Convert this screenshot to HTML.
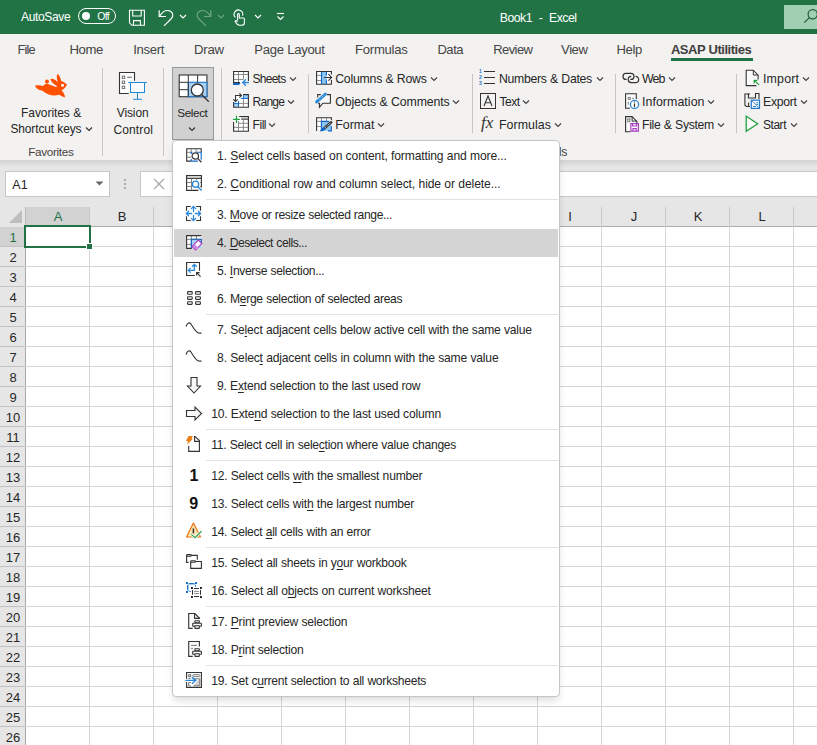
<!DOCTYPE html>
<html><head><meta charset="utf-8"><title>Excel ASAP Utilities</title><style>
*{margin:0;padding:0;box-sizing:border-box}
html,body{width:817px;height:745px;overflow:hidden;background:#fff;position:relative;font-family:"Liberation Sans",sans-serif}
.r{position:absolute}
.t{position:absolute;white-space:nowrap;font-family:"Liberation Sans",sans-serif}
u{text-decoration:underline;text-underline-offset:1.5px;text-decoration-thickness:1px}
</style></head><body>
<div class="r" style="left:0;top:0;width:817px;height:34px;background:#217346"></div>
<div class="t" style="left:21.00px;top:10.97px;font-size:12.08px;line-height:12.08px;letter-spacing:-0.386px;word-spacing:0.386px;color:#ffffff;">AutoSave</div>
<div class="r" style="left:78px;top:8px;width:38px;height:16px;border:1.3px solid #fff;border-radius:8px"></div>
<div class="r" style="left:81.5px;top:12px;width:8px;height:8px;border-radius:4px;background:#fff"></div>
<div class="t" style="left:97.30px;top:11.41px;font-size:10.50px;line-height:10.50px;letter-spacing:-0.670px;word-spacing:0.670px;color:#ffffff;">Off</div>
<svg class="r" style="left:125px;top:5px" width="24" height="24" viewBox="0 0 24 24" fill="none" stroke="#fff" stroke-width="1.1">
<path d="M4.5,5.3 H19.4 V20.3 H7 L4.5,17.8 Z"/><path d="M7.7,5.3 V11 H16.2 V5.3"/><path d="M8.5,20.3 V15.6 H15.4 V20.3"/></svg>
<svg class="r" style="left:155px;top:7px" width="22" height="22" viewBox="0 0 22 22" fill="none" stroke="#fff" stroke-width="1.2">
<path d="M4.2,3.2 V9.5 H11"/><path d="M4.8,9 C7.5,4.5 11,3.2 13.5,3.6 C16.5,4 18.5,6.5 17.6,9.5 C17,11.5 15,13 9,18.8"/></svg>
<svg class="r" style="left:179px;top:14px" width="8" height="5" viewBox="0 0 8 5" fill="none" stroke="#fff" stroke-width="1.1"><path d="M1,1 L4,4 L7,1"/></svg>
<svg class="r" style="left:193.4px;top:7px" width="22" height="22" viewBox="0 0 22 22" fill="none" stroke="#6fa586" stroke-width="1.2">
<g transform="translate(22,0) scale(-1,1)"><path d="M4.2,3.2 V9.5 H11"/><path d="M4.8,9 C7.5,4.5 11,3.2 13.5,3.6 C16.5,4 18.5,6.5 17.6,9.5 C17,11.5 15,13 9,18.8"/></g></svg>
<svg class="r" style="left:217px;top:14px" width="8" height="5" viewBox="0 0 8 5" fill="none" stroke="#6fa586" stroke-width="1.1"><path d="M1,1 L4,4 L7,1"/></svg>
<svg class="r" style="left:228px;top:6px" width="24" height="24" viewBox="0 0 24 24" fill="none" stroke="#fff" stroke-width="1.1">
<path d="M7.4,11.4 A4.3,4.3 0 1 1 14.5,9.7"/><path d="M9.6,14.5 V8.5 C9.6,7.3 11.3,7.3 11.3,8.5 V12 H15.5 C16,12 16.4,12.4 16.4,13 V17 C16.4,18.5 15,19.3 13.5,19.3 H11.5 C10.5,19.3 9.8,18.8 9,18 L7.2,15.8 C6.8,15.2 7.5,14.4 8.2,14.8 L9.6,15.8"/></svg>
<svg class="r" style="left:254px;top:14px" width="8" height="5" viewBox="0 0 8 5" fill="none" stroke="#fff" stroke-width="1.1"><path d="M1,1 L4,4 L7,1"/></svg>
<svg class="r" style="left:276px;top:12px" width="9" height="9" viewBox="0 0 9 9" fill="none" stroke="#fff" stroke-width="1.1"><path d="M1,1.5 H8"/><path d="M1.5,4.5 L4.5,7.5 L7.5,4.5"/></svg>
<div class="t" style="left:499.80px;top:11.94px;font-size:12.24px;line-height:12.24px;letter-spacing:-0.509px;word-spacing:0.509px;color:#ffffff;">Book1&nbsp; -&nbsp; Excel</div>
<div class="r" style="left:784px;top:5px;width:40px;height:24px;background:#a0cfb2"></div>
<svg class="r" style="left:800px;top:8px" width="20" height="18" viewBox="0 0 20 18" fill="none" stroke="#1e5c38" stroke-width="1.2"><circle cx="12.7" cy="6.3" r="4.6"/><path d="M9.4,9.6 L4.3,14.7"/></svg>
<div class="r" style="left:0;top:34px;width:817px;height:126px;background:#f3f2f1"></div>
<div class="t" style="left:17.50px;top:44.02px;font-size:12.73px;line-height:12.73px;letter-spacing:-0.838px;word-spacing:0.838px;color:#444444;">File</div>
<div class="t" style="left:69.40px;top:43.07px;font-size:13.15px;line-height:13.15px;letter-spacing:-0.394px;word-spacing:0.394px;color:#444444;">Home</div>
<div class="t" style="left:133.20px;top:43.11px;font-size:13.10px;line-height:13.10px;letter-spacing:-0.292px;word-spacing:0.292px;color:#444444;">Insert</div>
<div class="t" style="left:193.90px;top:43.01px;font-size:13.22px;line-height:13.22px;letter-spacing:-0.192px;word-spacing:0.192px;color:#444444;">Draw</div>
<div class="t" style="left:254.30px;top:43.10px;font-size:13.12px;line-height:13.12px;letter-spacing:-0.330px;word-spacing:0.330px;color:#444444;">Page Layout</div>
<div class="t" style="left:355.10px;top:43.08px;font-size:13.13px;line-height:13.13px;letter-spacing:-0.291px;word-spacing:0.291px;color:#444444;">Formulas</div>
<div class="t" style="left:437.40px;top:43.14px;font-size:13.07px;line-height:13.07px;letter-spacing:-0.472px;word-spacing:0.472px;color:#444444;">Data</div>
<div class="t" style="left:493.20px;top:43.20px;font-size:13.00px;line-height:13.00px;letter-spacing:-0.571px;word-spacing:0.571px;color:#444444;">Review</div>
<div class="t" style="left:561.10px;top:43.13px;font-size:13.08px;line-height:13.08px;letter-spacing:-0.452px;word-spacing:0.452px;color:#444444;">View</div>
<div class="t" style="left:616.60px;top:43.13px;font-size:13.08px;line-height:13.08px;letter-spacing:-0.436px;word-spacing:0.436px;color:#444444;">Help</div>
<div class="t" style="left:670.90px;top:43.19px;font-size:13.00px;line-height:13.00px;letter-spacing:-0.472px;word-spacing:0.472px;color:#404040;font-weight:bold;">ASAP Utilities</div>
<div class="r" style="left:671px;top:58px;width:82px;height:3px;background:#217346"></div>
<div class="r" style="left:102px;top:68px;width:1px;height:88px;background:#c8c6c4"></div>
<div class="r" style="left:163px;top:68px;width:1px;height:88px;background:#c8c6c4"></div>
<div class="r" style="left:221px;top:68px;width:1px;height:88px;background:#c8c6c4"></div>
<div class="r" style="left:308px;top:74px;width:1px;height:59px;background:#c8c6c4"></div>
<div class="r" style="left:472px;top:74px;width:1px;height:59px;background:#c8c6c4"></div>
<div class="r" style="left:615px;top:74px;width:1px;height:59px;background:#c8c6c4"></div>
<div class="r" style="left:736px;top:74px;width:1px;height:59px;background:#c8c6c4"></div>
<svg class="r" style="left:30px;top:68px" width="42" height="34" viewBox="0 0 42 34">
<path fill="#ff5000" d="M5,17.8 C8,17 11,17.3 12.5,18.3 C14,16.8 16,15.8 17,15.5 C21,17 24.5,19 27.5,19 L26,17.5 C23,15.5 21,13.5 20.3,11.3 C21.5,10 24,11 26,12.5 L27.8,14.2 C26.8,11 26.2,8 27.5,6 C29.2,6.5 30.3,9 31.2,13 C33.2,13.5 35.5,15 37,16.5 C36,19 34,21 31.5,22.5 C33,24 35,26 35,29.5 C33,29 31,27.5 29,26.8 C24,28.3 17,27.3 12.5,22.8 C10,22.3 6.5,21.5 5,17.8 Z"/>
<circle cx="17" cy="13.4" r="2" fill="#ff5000"/><circle cx="32.5" cy="17.2" r="1.5" fill="#fff"/></svg>
<div class="t" style="left:21.10px;top:108.37px;font-size:11.97px;line-height:11.97px;letter-spacing:-0.057px;word-spacing:0.057px;color:#262626;">Favorites &amp;</div>
<div class="t" style="left:10.40px;top:124.09px;font-size:11.94px;line-height:11.94px;letter-spacing:-0.102px;word-spacing:0.102px;color:#262626;">Shortcut keys</div>
<svg class="r" style="left:84.5px;top:126px" width="8" height="6" viewBox="0 0 8 6" fill="none" stroke="#333" stroke-width="1.2"><path d="M1,1.5 L4,4.5 L7,1.5"/></svg>
<div class="t" style="left:28.20px;top:145.54px;font-size:11.77px;line-height:11.77px;letter-spacing:-0.348px;word-spacing:0.348px;color:#444444;">Favorites</div>
<svg class="r" style="left:114px;top:68px" width="40" height="36" viewBox="0 0 40 36" fill="none">
<rect x="5.5" y="4.5" width="15" height="21" fill="#fdfdfd"/><path d="M14.7,25.5 H5.5 V4.5 H20.5 V12.7" stroke="#333" stroke-width="1.1"/>
<rect x="8.3" y="8.1" width="2.4" height="2.4" fill="#fff" stroke="#666" stroke-width="0.9"/>
<rect x="8.3" y="13.1" width="2.4" height="2.4" fill="#fff" stroke="#666" stroke-width="0.9"/>
<rect x="8.3" y="18.1" width="2.4" height="2.4" fill="#fff" stroke="#666" stroke-width="0.9"/>
<path d="M13.2,9.3 H17.9" stroke="#666" stroke-width="1"/>
<rect x="16.5" y="14.5" width="14" height="10" fill="#fafafa" stroke="#1e88d8" stroke-width="1"/>
<path d="M14.2,14.5 H32.8 M23.5,24.5 V31.3 M19.1,31.3 H27.9" stroke="#1e88d8" stroke-width="1"/></svg>
<div class="t" style="left:116.80px;top:108.39px;font-size:11.94px;line-height:11.94px;letter-spacing:-0.101px;word-spacing:0.101px;color:#262626;">Vision</div>
<div class="t" style="left:113.50px;top:124.04px;font-size:12.00px;line-height:12.00px;letter-spacing:0.119px;word-spacing:0.000px;color:#262626;">Control</div>
<div class="r" style="left:172px;top:67px;width:42px;height:73px;background:#d1d1d1;border:1px solid #999"></div>
<svg class="r" style="left:170px;top:64px" width="48" height="48" viewBox="0 0 48 48" fill="none">
<rect x="9.2" y="11" width="27.7" height="21.7" fill="#fff" stroke="#333" stroke-width="1.1"/>
<rect x="18.3" y="18.3" width="18.6" height="14.4" fill="#a8d1f3" stroke="#1c74c8" stroke-width="1.1"/>
<path d="M18.3,11 V18 M27.6,11 V18.3 M9.2,18.3 H18 M9.2,25.7 H18.3 M18.3,18.3 V32.7" stroke="#333" stroke-width="1"/>
<circle cx="27.3" cy="26" r="6" fill="#fff" stroke="#333" stroke-width="1.3"/>
<path d="M31.6,30.5 L38.8,37.7" stroke="#333" stroke-width="1.3"/></svg>
<div class="t" style="left:177.30px;top:107.16px;font-size:11.74px;line-height:11.74px;letter-spacing:-0.408px;word-spacing:0.408px;color:#262626;">Select</div>
<svg class="r" style="left:188px;top:125.5px" width="8" height="6" viewBox="0 0 8 6" fill="none" stroke="#333" stroke-width="1.2"><path d="M1,1.5 L4,4.5 L7,1.5"/></svg>
<div class="t" style="left:252.50px;top:73.35px;font-size:11.99px;line-height:11.99px;letter-spacing:-0.723px;word-spacing:0.723px;color:#262626;">Sheets</div>
<svg class="r" style="left:288.6px;top:75.5px" width="8" height="6" viewBox="0 0 8 6" fill="none" stroke="#444" stroke-width="1.2"><path d="M1,1.5 L4,4.5 L7,1.5"/></svg>
<div class="t" style="left:252.60px;top:96.32px;font-size:12.02px;line-height:12.02px;letter-spacing:-0.783px;word-spacing:0.783px;color:#262626;">Range</div>
<svg class="r" style="left:287.0px;top:98.8px" width="8" height="6" viewBox="0 0 8 6" fill="none" stroke="#444" stroke-width="1.2"><path d="M1,1.5 L4,4.5 L7,1.5"/></svg>
<div class="t" style="left:252.60px;top:119.34px;font-size:12.00px;line-height:12.00px;letter-spacing:-0.476px;word-spacing:0.476px;color:#262626;">Fill</div>
<svg class="r" style="left:267.5px;top:121.7px" width="8" height="6" viewBox="0 0 8 6" fill="none" stroke="#444" stroke-width="1.2"><path d="M1,1.5 L4,4.5 L7,1.5"/></svg>
<div class="t" style="left:335.20px;top:73.10px;font-size:12.29px;line-height:12.29px;letter-spacing:-0.230px;word-spacing:0.230px;color:#262626;">Columns &amp; Rows</div>
<svg class="r" style="left:429.9px;top:75.5px" width="8" height="6" viewBox="0 0 8 6" fill="none" stroke="#444" stroke-width="1.2"><path d="M1,1.5 L4,4.5 L7,1.5"/></svg>
<div class="t" style="left:335.20px;top:96.06px;font-size:12.33px;line-height:12.33px;letter-spacing:-0.127px;word-spacing:0.127px;color:#262626;">Objects &amp; Comments</div>
<svg class="r" style="left:452.0px;top:98.8px" width="8" height="6" viewBox="0 0 8 6" fill="none" stroke="#444" stroke-width="1.2"><path d="M1,1.5 L4,4.5 L7,1.5"/></svg>
<div class="t" style="left:335.20px;top:119.00px;font-size:12.40px;line-height:12.40px;letter-spacing:0.006px;word-spacing:0.000px;color:#262626;">Format</div>
<svg class="r" style="left:376.5px;top:121.7px" width="8" height="6" viewBox="0 0 8 6" fill="none" stroke="#444" stroke-width="1.2"><path d="M1,1.5 L4,4.5 L7,1.5"/></svg>
<div class="t" style="left:498.90px;top:73.13px;font-size:12.26px;line-height:12.26px;letter-spacing:-0.277px;word-spacing:0.277px;color:#262626;">Numbers &amp; Dates</div>
<svg class="r" style="left:595.6px;top:75.5px" width="8" height="6" viewBox="0 0 8 6" fill="none" stroke="#444" stroke-width="1.2"><path d="M1,1.5 L4,4.5 L7,1.5"/></svg>
<div class="t" style="left:499.60px;top:96.28px;font-size:12.07px;line-height:12.07px;letter-spacing:-0.577px;word-spacing:0.577px;color:#262626;">Text</div>
<svg class="r" style="left:522.4px;top:98.8px" width="8" height="6" viewBox="0 0 8 6" fill="none" stroke="#444" stroke-width="1.2"><path d="M1,1.5 L4,4.5 L7,1.5"/></svg>
<div class="t" style="left:498.90px;top:119.00px;font-size:12.40px;line-height:12.40px;letter-spacing:0.060px;word-spacing:0.000px;color:#262626;">Formulas</div>
<svg class="r" style="left:554.0px;top:121.7px" width="8" height="6" viewBox="0 0 8 6" fill="none" stroke="#444" stroke-width="1.2"><path d="M1,1.5 L4,4.5 L7,1.5"/></svg>
<div class="t" style="left:642.00px;top:73.00px;font-size:12.40px;line-height:12.40px;letter-spacing:-0.936px;word-spacing:0.936px;color:#262626;">Web</div>
<svg class="r" style="left:668.0px;top:75.5px" width="8" height="6" viewBox="0 0 8 6" fill="none" stroke="#444" stroke-width="1.2"><path d="M1,1.5 L4,4.5 L7,1.5"/></svg>
<div class="t" style="left:642.00px;top:96.00px;font-size:12.40px;line-height:12.40px;letter-spacing:0.048px;word-spacing:0.000px;color:#262626;">Information</div>
<svg class="r" style="left:707.0px;top:98.8px" width="8" height="6" viewBox="0 0 8 6" fill="none" stroke="#444" stroke-width="1.2"><path d="M1,1.5 L4,4.5 L7,1.5"/></svg>
<div class="t" style="left:642.00px;top:119.15px;font-size:12.23px;line-height:12.23px;letter-spacing:-0.312px;word-spacing:0.312px;color:#262626;">File &amp; System</div>
<svg class="r" style="left:716.6px;top:121.7px" width="8" height="6" viewBox="0 0 8 6" fill="none" stroke="#444" stroke-width="1.2"><path d="M1,1.5 L4,4.5 L7,1.5"/></svg>
<div class="t" style="left:763.00px;top:73.00px;font-size:12.40px;line-height:12.40px;letter-spacing:0.172px;word-spacing:0.000px;color:#262626;">Import</div>
<svg class="r" style="left:801.6px;top:75.5px" width="8" height="6" viewBox="0 0 8 6" fill="none" stroke="#444" stroke-width="1.2"><path d="M1,1.5 L4,4.5 L7,1.5"/></svg>
<div class="t" style="left:763.00px;top:96.14px;font-size:12.24px;line-height:12.24px;letter-spacing:-0.274px;word-spacing:0.274px;color:#262626;">Export</div>
<svg class="r" style="left:800.0px;top:98.8px" width="8" height="6" viewBox="0 0 8 6" fill="none" stroke="#444" stroke-width="1.2"><path d="M1,1.5 L4,4.5 L7,1.5"/></svg>
<div class="t" style="left:763.00px;top:119.28px;font-size:12.07px;line-height:12.07px;letter-spacing:-0.497px;word-spacing:0.497px;color:#262626;">Start</div>
<svg class="r" style="left:789.7px;top:121.7px" width="8" height="6" viewBox="0 0 8 6" fill="none" stroke="#444" stroke-width="1.2"><path d="M1,1.5 L4,4.5 L7,1.5"/></svg>
<svg class="r" style="left:230px;top:68px" width="24" height="22" viewBox="0 0 24 22" fill="none"><rect x="3.6" y="3.5" width="14.8" height="11.5" fill="#fff"/><path d="M3.6,15 V3.5 H18.4 V13" stroke="#333" stroke-width="1.1"/><path d="M8.5,4 V14.5 M13.5,4 V11.5 M4,6.5 H18 M4,11.5 H13" stroke="#808080" stroke-width="0.9"/><path d="M3.5,14.5 H10" stroke="#333"/><path d="M3,15 H10.5 L9,16.9 H3 Z" fill="#1166c4"/><path d="M12.8,14.5 H19 M15.9,11.3 L12.7,14.5 L15.9,17.7" stroke="#2b88d8" stroke-width="1.3"/></svg>
<svg class="r" style="left:230px;top:90px" width="24" height="22" viewBox="0 0 24 22" fill="none"><rect x="3.6" y="4.6" width="14.8" height="12.7" fill="#fff"/><rect x="13.4" y="5" width="4.6" height="3.3" fill="#9fd0f8"/><rect x="4" y="13.4" width="4.5" height="3.5" fill="#9fd0f8"/><path d="M13,4.6 H18.4 V17.3 H3.6 V12.1" stroke="#333" stroke-width="1.1"/><path d="M13.4,8.5 V17 M9,13.4 H18" stroke="#808080" stroke-width="0.9"/><path d="M10.9,8.4 H18 M13.4,5.5 V8.4 M3.6,13.4 H8.5 M8.5,10.9 V17" stroke="#1166c4" stroke-width="1"/><path d="M5.5,11 V5.5 H11.3 M9.4,3.3 L11.5,5.5 L9.4,7.6 M3.3,9.4 L5.5,11.5 L7.7,9.4" stroke="#333" stroke-width="1.1"/></svg>
<svg class="r" style="left:230px;top:112px" width="24" height="22" viewBox="0 0 24 22" fill="none"><rect x="3.6" y="4.5" width="14.8" height="14.8" fill="#fff"/><rect x="10.9" y="5" width="7" height="1.9" fill="#d0d0d0"/><path d="M9.1,4.5 H18.4 V19.3 H3.6 V10" stroke="#333" stroke-width="1.1"/><path d="M11.2,7.2 H18" stroke="#333" stroke-width="1"/><path d="M8.5,9.1 V19 M13.4,7.5 V19 M8.5,11.3 H18 M4,15.4 H18" stroke="#808080" stroke-width="0.9"/><path d="M3,7.4 H9.9 M6.5,3.8 V10.9" stroke="#22a040" stroke-width="1.3"/></svg>
<svg class="r" style="left:312px;top:68px" width="24" height="22" viewBox="0 0 24 22" fill="none"><rect x="4.6" y="3.5" width="14.8" height="12.8" fill="#fff"/><rect x="9.5" y="3.8" width="4.9" height="12.2" fill="#8cc4f2"/><path d="M19.4,6.5 V3.5 H4.6 V16.3 H19.4 V12.1" stroke="#333" stroke-width="1.1"/><path d="M5,7.3 H9.2 M5,12.5 H9.2" stroke="#808080" stroke-width="0.9"/><path d="M9.5,4 V16 M14.4,4 V7.5 M14.4,11.5 V16" stroke="#1166c4" stroke-width="1.1"/><path d="M12.1,9.5 H19.4 M16.4,6.2 L19.6,9.4 L16.4,12.7" stroke="#333" stroke-width="1.1"/></svg>
<svg class="r" style="left:312px;top:90px" width="24" height="22" viewBox="0 0 24 22" fill="none"><rect x="5.7" y="4.6" width="12.7" height="8.6" fill="#fafafa"/><path d="M5.7,7.5 V4.6 H8.8 M15,4.6 H18.4 V13.2 H10.9 L7.4,17.2 V13.3 H6" stroke="#333" stroke-width="1.1"/><path d="M4.6,12 L13.4,4.2" stroke="#2b88d8" stroke-width="3" stroke-linecap="round"/><path d="M4.3,12.6 L5.5,10" stroke="#2b88d8" stroke-width="2"/><path d="M7.3,9.4 L12.5,4.8" stroke="#fff" stroke-width="0.7" stroke-dasharray="0.8,1.2"/></svg>
<svg class="r" style="left:312px;top:112px" width="24" height="22" viewBox="0 0 24 22" fill="none"><rect x="4.6" y="5.7" width="14.8" height="13.2" fill="#fff"/><rect x="9.4" y="9.4" width="10" height="9.4" fill="#8cc4f2"/><path d="M4.6,18.9 V5.7 H19.4 V8.3" stroke="#333" stroke-width="1.1"/><path d="M9.4,6 V9.4 M14.5,6 V9.4 M5,9.4 H9.4 M5,14.5 H9.4" stroke="#808080" stroke-width="0.9"/><path d="M9.4,18 V9.4 H17 M19.4,14.2 V18.9 H16" stroke="#1166c4" stroke-width="1.1"/><path d="M12,16.5 L19.2,10.3" stroke="#333" stroke-width="2.6" stroke-linecap="round"/><path d="M12,16.5 L19.2,10.3" stroke="#fff" stroke-width="1" stroke-dasharray="0.9,0.9"/><path d="M7.5,19 C9,19.5 12,19.5 13.5,17 L11.5,15 C10,16 9,18 7.5,19 Z" fill="#1166c4"/></svg>
<svg class="r" style="left:478px;top:68px" width="20" height="18" viewBox="0 0 20 18" fill="none"><text x="1" y="5" font-size="5" font-weight="bold" fill="#1c74c8" font-family="Liberation Sans">1</text><text x="1" y="11" font-size="5" font-weight="bold" fill="#1c74c8" font-family="Liberation Sans">2</text><text x="1" y="17" font-size="5" font-weight="bold" fill="#1c74c8" font-family="Liberation Sans">3</text><path d="M6,3.5 H17 M6,9.5 H17 M6,15.5 H17" stroke="#333" stroke-width="1.1"/></svg>
<svg class="r" style="left:480px;top:93px" width="18" height="18" viewBox="0 0 18 18" fill="none"><rect x="0.5" y="0.5" width="15" height="15" stroke="#333"/><path d="M4,13 L8,3 L12,13 M5.3,9.7 H10.7" stroke="#333" stroke-width="1.1"/></svg>
<div class="t" style="left:481px;top:114px;font-family:'Liberation Serif',serif;font-style:italic;font-size:17px;line-height:18px;color:#333">fx</div>
<svg class="r" style="left:620px;top:70px" width="24" height="18" viewBox="0 0 24 18" fill="none"><path d="M6.6,9.4 H6 A3,3 0 0 1 6,3.4 H11 A3,3 0 0 1 11,9.4 H10.3" stroke="#333" stroke-width="1.2"/><path d="M11.2,6.3 A3.15,3.15 0 0 0 11.5,12.6 H15.5 A3.15,3.15 0 0 0 15.5,6.3" stroke="#333" stroke-width="1.2"/></svg>
<svg class="r" style="left:620px;top:90px" width="24" height="22" viewBox="0 0 24 22" fill="none"><rect x="5.6" y="3.8" width="10.7" height="14.5" fill="#fafafa"/><path d="M10,18.3 H5.6 V3.8 H16.3 V8.9" stroke="#333" stroke-width="1.1"/><rect x="8.3" y="7.4" width="2" height="2" stroke="#777" stroke-width="0.9"/><path d="M12.1,8.3 H13.9 M8.3,11.8 V14.8" stroke="#777" stroke-width="0.9"/><circle cx="14.5" cy="14.5" r="4.1" fill="#fff" stroke="#2b88d8" stroke-width="1.3"/><path d="M14.5,13.4 V17.2 M14.5,11.6 V12.5" stroke="#333" stroke-width="1.2"/></svg>
<svg class="r" style="left:620px;top:90px" width="24" height="44" viewBox="0 0 24 44" fill="none"><rect x="5.6" y="26.6" width="11" height="15" fill="#fafafa"/><path d="M10.4,41.8 H5.6 V26.6 H12 L16.9,31.4 V33" stroke="#333" stroke-width="1.1"/><path d="M12.1,26.6 V31.1 H16.9" stroke="#333" stroke-width="1"/><path d="M6.5,29.3 H10.9 M6.5,31.3 H10.9 M7.8,27.8 V32.5 M9.6,27.8 V32.5" stroke="#888" stroke-width="0.8"/><path d="M10.9,33.6 H18.4 V41.2 H10.9 Z" fill="#fff" stroke="#a83ec2" stroke-width="1.2"/><path d="M12.6,33.6 V36 H16.6 V33.6 M12.9,41.2 V38.6 H16.3 V41.2" stroke="#a83ec2" stroke-width="1.1"/></svg>
<svg class="r" style="left:740px;top:68px" width="24" height="22" viewBox="0 0 24 22" fill="none"><rect x="6.2" y="2.2" width="11.9" height="15.5" fill="#fafafa"/><path d="M16.4,17.6 H6.2 V2.2 H13.3 L18.1,7.1 V11.5" stroke="#333" stroke-width="1.1"/><path d="M13.3,2.4 V7 H18" stroke="#333" stroke-width="1"/><path d="M19,16.8 L14.2,12.4 M14.2,15.6 V12.4 H17.4" stroke="#22a040" stroke-width="1.2"/></svg>
<svg class="r" style="left:740px;top:90px" width="24" height="22" viewBox="0 0 24 22" fill="none"><path d="M10,4 H4.9 V15 L6.3,16.5 H10" stroke="#333" stroke-width="1.1"/><path d="M8.4,3.5 V8 H15.5 V3.5 M15,3.5 H19 V9" stroke="#333" stroke-width="1.1"/><path d="M8.6,12.5 V16.5" stroke="#333" stroke-width="1.1"/><rect x="11.3" y="10.2" width="8.2" height="8.2" fill="#fff" stroke="#1c74c8" stroke-width="1.2"/><path d="M12,10.8 L19,17.8 M13,16.5 H16 M16,12.8 H18.2 M16.5,14.5 H18.2" stroke="#1c74c8" stroke-width="0.9"/></svg>
<svg class="r" style="left:740px;top:112px" width="24" height="22" viewBox="0 0 24 22" fill="none"><path d="M6.2,4.2 L17.7,11.8 L6.2,19.3 Z" fill="#fafafa" stroke="#22a040" stroke-width="1.3"/></svg>
<div class="t" style="left:539.80px;top:145.64px;font-size:12.24px;line-height:12.24px;letter-spacing:-0.269px;word-spacing:0.269px;color:#444444;">Tools</div>
<div class="r" style="left:0;top:160px;width:817px;height:47px;background:#e6e6e6"></div>
<div class="r" style="left:0;top:160px;width:817px;height:7px;background:linear-gradient(#d2d2d2,#e6e6e6)"></div>
<div class="r" style="left:5px;top:171px;width:105px;height:26px;background:#fff;border:1px solid #c6c6c6"></div>
<div class="t" style="left:12.20px;top:178.62px;font-size:12.50px;line-height:12.50px;letter-spacing:0.312px;word-spacing:0.000px;color:#262626;">A1</div>
<svg class="r" style="left:95px;top:181px" width="9" height="5" viewBox="0 0 9 5"><path d="M0.5,0.5 H8.5 L4.5,4.5 Z" fill="#666"/></svg>
<div class="r" style="left:124px;top:179px;width:2px;height:2px;background:#aaa"></div>
<div class="r" style="left:124px;top:183px;width:2px;height:2px;background:#aaa"></div>
<div class="r" style="left:124px;top:187px;width:2px;height:2px;background:#aaa"></div>
<div class="r" style="left:140px;top:171px;width:680px;height:26px;background:#fff;border:1px solid #c6c6c6"></div>
<svg class="r" style="left:153px;top:178px" width="12" height="12" viewBox="0 0 12 12"><path d="M1,1 L11,11 M11,1 L1,11" stroke="#a6a6a6" stroke-width="1.2"/></svg>
<div class="r" style="left:0;top:207px;width:817px;height:538px;background:#fff"></div>
<div class="r" style="left:0;top:207px;width:817px;height:20px;background:#e6e6e6;border-bottom:1px solid #ababab"></div>
<div class="r" style="left:0;top:226px;width:26px;height:519px;background:#e6e6e6;border-right:1px solid #a8a8a8"></div>
<div class="r" style="left:26px;top:207px;width:63px;height:19px;background:#d2d2d2"></div>
<div class="r" style="left:25px;top:207px;width:1px;height:19px;background:#bdbdbd"></div>
<div class="r" style="left:0;top:227px;width:25px;height:19px;background:#d2d2d2"></div>
<svg class="r" style="left:9px;top:210px" width="13" height="13" viewBox="0 0 13 13"><path d="M13,0 V13 H0 Z" fill="#bdbdbd"/></svg>
<div class="r" style="left:89px;top:207px;width:1px;height:19px;background:#c8c8c8"></div>
<div class="r" style="left:89px;top:226px;width:1px;height:519px;background:#d5d5d5"></div>
<div class="t" style="left:26.0px;top:209.2px;width:64px;text-align:center;font-size:13px;line-height:16px;color:#217346">A</div>
<div class="r" style="left:153px;top:207px;width:1px;height:19px;background:#c8c8c8"></div>
<div class="r" style="left:153px;top:226px;width:1px;height:519px;background:#d5d5d5"></div>
<div class="t" style="left:90.0px;top:209.2px;width:64px;text-align:center;font-size:13px;line-height:16px;color:#262626">B</div>
<div class="r" style="left:217px;top:207px;width:1px;height:19px;background:#c8c8c8"></div>
<div class="r" style="left:217px;top:226px;width:1px;height:519px;background:#d5d5d5"></div>
<div class="t" style="left:154.0px;top:209.2px;width:64px;text-align:center;font-size:13px;line-height:16px;color:#262626">C</div>
<div class="r" style="left:281px;top:207px;width:1px;height:19px;background:#c8c8c8"></div>
<div class="r" style="left:281px;top:226px;width:1px;height:519px;background:#d5d5d5"></div>
<div class="t" style="left:218.0px;top:209.2px;width:64px;text-align:center;font-size:13px;line-height:16px;color:#262626">D</div>
<div class="r" style="left:345px;top:207px;width:1px;height:19px;background:#c8c8c8"></div>
<div class="r" style="left:345px;top:226px;width:1px;height:519px;background:#d5d5d5"></div>
<div class="t" style="left:282.0px;top:209.2px;width:64px;text-align:center;font-size:13px;line-height:16px;color:#262626">E</div>
<div class="r" style="left:409px;top:207px;width:1px;height:19px;background:#c8c8c8"></div>
<div class="r" style="left:409px;top:226px;width:1px;height:519px;background:#d5d5d5"></div>
<div class="t" style="left:346.0px;top:209.2px;width:64px;text-align:center;font-size:13px;line-height:16px;color:#262626">F</div>
<div class="r" style="left:473px;top:207px;width:1px;height:19px;background:#c8c8c8"></div>
<div class="r" style="left:473px;top:226px;width:1px;height:519px;background:#d5d5d5"></div>
<div class="t" style="left:410.0px;top:209.2px;width:64px;text-align:center;font-size:13px;line-height:16px;color:#262626">G</div>
<div class="r" style="left:537px;top:207px;width:1px;height:19px;background:#c8c8c8"></div>
<div class="r" style="left:537px;top:226px;width:1px;height:519px;background:#d5d5d5"></div>
<div class="t" style="left:474.0px;top:209.2px;width:64px;text-align:center;font-size:13px;line-height:16px;color:#262626">H</div>
<div class="r" style="left:601px;top:207px;width:1px;height:19px;background:#c8c8c8"></div>
<div class="r" style="left:601px;top:226px;width:1px;height:519px;background:#d5d5d5"></div>
<div class="t" style="left:538.0px;top:209.2px;width:64px;text-align:center;font-size:13px;line-height:16px;color:#262626">I</div>
<div class="r" style="left:665px;top:207px;width:1px;height:19px;background:#c8c8c8"></div>
<div class="r" style="left:665px;top:226px;width:1px;height:519px;background:#d5d5d5"></div>
<div class="t" style="left:602.0px;top:209.2px;width:64px;text-align:center;font-size:13px;line-height:16px;color:#262626">J</div>
<div class="r" style="left:729px;top:207px;width:1px;height:19px;background:#c8c8c8"></div>
<div class="r" style="left:729px;top:226px;width:1px;height:519px;background:#d5d5d5"></div>
<div class="t" style="left:666.0px;top:209.2px;width:64px;text-align:center;font-size:13px;line-height:16px;color:#262626">K</div>
<div class="r" style="left:793px;top:207px;width:1px;height:19px;background:#c8c8c8"></div>
<div class="r" style="left:793px;top:226px;width:1px;height:519px;background:#d5d5d5"></div>
<div class="t" style="left:730.0px;top:209.2px;width:64px;text-align:center;font-size:13px;line-height:16px;color:#262626">L</div>
<div class="r" style="left:857px;top:207px;width:1px;height:19px;background:#c8c8c8"></div>
<div class="r" style="left:857px;top:226px;width:1px;height:519px;background:#d5d5d5"></div>
<div class="t" style="left:794.0px;top:209.2px;width:64px;text-align:center;font-size:13px;line-height:16px;color:#262626">M</div>
<div class="r" style="left:25px;top:246px;width:792px;height:1px;background:#d5d5d5"></div>
<div class="r" style="left:0;top:246px;width:25px;height:1px;background:#c2c2c2"></div>
<div class="t" style="left:0.5px;top:230.3px;width:25px;text-align:center;font-size:13px;line-height:16px;color:#217346">1</div>
<div class="r" style="left:25px;top:266px;width:792px;height:1px;background:#d5d5d5"></div>
<div class="r" style="left:0;top:266px;width:25px;height:1px;background:#c2c2c2"></div>
<div class="t" style="left:0.5px;top:250.3px;width:25px;text-align:center;font-size:13px;line-height:16px;color:#262626">2</div>
<div class="r" style="left:25px;top:286px;width:792px;height:1px;background:#d5d5d5"></div>
<div class="r" style="left:0;top:286px;width:25px;height:1px;background:#c2c2c2"></div>
<div class="t" style="left:0.5px;top:270.3px;width:25px;text-align:center;font-size:13px;line-height:16px;color:#262626">3</div>
<div class="r" style="left:25px;top:306px;width:792px;height:1px;background:#d5d5d5"></div>
<div class="r" style="left:0;top:306px;width:25px;height:1px;background:#c2c2c2"></div>
<div class="t" style="left:0.5px;top:290.3px;width:25px;text-align:center;font-size:13px;line-height:16px;color:#262626">4</div>
<div class="r" style="left:25px;top:326px;width:792px;height:1px;background:#d5d5d5"></div>
<div class="r" style="left:0;top:326px;width:25px;height:1px;background:#c2c2c2"></div>
<div class="t" style="left:0.5px;top:310.3px;width:25px;text-align:center;font-size:13px;line-height:16px;color:#262626">5</div>
<div class="r" style="left:25px;top:346px;width:792px;height:1px;background:#d5d5d5"></div>
<div class="r" style="left:0;top:346px;width:25px;height:1px;background:#c2c2c2"></div>
<div class="t" style="left:0.5px;top:330.3px;width:25px;text-align:center;font-size:13px;line-height:16px;color:#262626">6</div>
<div class="r" style="left:25px;top:366px;width:792px;height:1px;background:#d5d5d5"></div>
<div class="r" style="left:0;top:366px;width:25px;height:1px;background:#c2c2c2"></div>
<div class="t" style="left:0.5px;top:350.3px;width:25px;text-align:center;font-size:13px;line-height:16px;color:#262626">7</div>
<div class="r" style="left:25px;top:386px;width:792px;height:1px;background:#d5d5d5"></div>
<div class="r" style="left:0;top:386px;width:25px;height:1px;background:#c2c2c2"></div>
<div class="t" style="left:0.5px;top:370.3px;width:25px;text-align:center;font-size:13px;line-height:16px;color:#262626">8</div>
<div class="r" style="left:25px;top:406px;width:792px;height:1px;background:#d5d5d5"></div>
<div class="r" style="left:0;top:406px;width:25px;height:1px;background:#c2c2c2"></div>
<div class="t" style="left:0.5px;top:390.3px;width:25px;text-align:center;font-size:13px;line-height:16px;color:#262626">9</div>
<div class="r" style="left:25px;top:426px;width:792px;height:1px;background:#d5d5d5"></div>
<div class="r" style="left:0;top:426px;width:25px;height:1px;background:#c2c2c2"></div>
<div class="t" style="left:0.5px;top:410.3px;width:25px;text-align:center;font-size:13px;line-height:16px;color:#262626">10</div>
<div class="r" style="left:25px;top:446px;width:792px;height:1px;background:#d5d5d5"></div>
<div class="r" style="left:0;top:446px;width:25px;height:1px;background:#c2c2c2"></div>
<div class="t" style="left:0.5px;top:430.3px;width:25px;text-align:center;font-size:13px;line-height:16px;color:#262626">11</div>
<div class="r" style="left:25px;top:466px;width:792px;height:1px;background:#d5d5d5"></div>
<div class="r" style="left:0;top:466px;width:25px;height:1px;background:#c2c2c2"></div>
<div class="t" style="left:0.5px;top:450.3px;width:25px;text-align:center;font-size:13px;line-height:16px;color:#262626">12</div>
<div class="r" style="left:25px;top:486px;width:792px;height:1px;background:#d5d5d5"></div>
<div class="r" style="left:0;top:486px;width:25px;height:1px;background:#c2c2c2"></div>
<div class="t" style="left:0.5px;top:470.3px;width:25px;text-align:center;font-size:13px;line-height:16px;color:#262626">13</div>
<div class="r" style="left:25px;top:506px;width:792px;height:1px;background:#d5d5d5"></div>
<div class="r" style="left:0;top:506px;width:25px;height:1px;background:#c2c2c2"></div>
<div class="t" style="left:0.5px;top:490.3px;width:25px;text-align:center;font-size:13px;line-height:16px;color:#262626">14</div>
<div class="r" style="left:25px;top:526px;width:792px;height:1px;background:#d5d5d5"></div>
<div class="r" style="left:0;top:526px;width:25px;height:1px;background:#c2c2c2"></div>
<div class="t" style="left:0.5px;top:510.3px;width:25px;text-align:center;font-size:13px;line-height:16px;color:#262626">15</div>
<div class="r" style="left:25px;top:546px;width:792px;height:1px;background:#d5d5d5"></div>
<div class="r" style="left:0;top:546px;width:25px;height:1px;background:#c2c2c2"></div>
<div class="t" style="left:0.5px;top:530.3px;width:25px;text-align:center;font-size:13px;line-height:16px;color:#262626">16</div>
<div class="r" style="left:25px;top:566px;width:792px;height:1px;background:#d5d5d5"></div>
<div class="r" style="left:0;top:566px;width:25px;height:1px;background:#c2c2c2"></div>
<div class="t" style="left:0.5px;top:550.3px;width:25px;text-align:center;font-size:13px;line-height:16px;color:#262626">17</div>
<div class="r" style="left:25px;top:586px;width:792px;height:1px;background:#d5d5d5"></div>
<div class="r" style="left:0;top:586px;width:25px;height:1px;background:#c2c2c2"></div>
<div class="t" style="left:0.5px;top:570.3px;width:25px;text-align:center;font-size:13px;line-height:16px;color:#262626">18</div>
<div class="r" style="left:25px;top:606px;width:792px;height:1px;background:#d5d5d5"></div>
<div class="r" style="left:0;top:606px;width:25px;height:1px;background:#c2c2c2"></div>
<div class="t" style="left:0.5px;top:590.3px;width:25px;text-align:center;font-size:13px;line-height:16px;color:#262626">19</div>
<div class="r" style="left:25px;top:626px;width:792px;height:1px;background:#d5d5d5"></div>
<div class="r" style="left:0;top:626px;width:25px;height:1px;background:#c2c2c2"></div>
<div class="t" style="left:0.5px;top:610.3px;width:25px;text-align:center;font-size:13px;line-height:16px;color:#262626">20</div>
<div class="r" style="left:25px;top:646px;width:792px;height:1px;background:#d5d5d5"></div>
<div class="r" style="left:0;top:646px;width:25px;height:1px;background:#c2c2c2"></div>
<div class="t" style="left:0.5px;top:630.3px;width:25px;text-align:center;font-size:13px;line-height:16px;color:#262626">21</div>
<div class="r" style="left:25px;top:666px;width:792px;height:1px;background:#d5d5d5"></div>
<div class="r" style="left:0;top:666px;width:25px;height:1px;background:#c2c2c2"></div>
<div class="t" style="left:0.5px;top:650.3px;width:25px;text-align:center;font-size:13px;line-height:16px;color:#262626">22</div>
<div class="r" style="left:25px;top:686px;width:792px;height:1px;background:#d5d5d5"></div>
<div class="r" style="left:0;top:686px;width:25px;height:1px;background:#c2c2c2"></div>
<div class="t" style="left:0.5px;top:670.3px;width:25px;text-align:center;font-size:13px;line-height:16px;color:#262626">23</div>
<div class="r" style="left:25px;top:706px;width:792px;height:1px;background:#d5d5d5"></div>
<div class="r" style="left:0;top:706px;width:25px;height:1px;background:#c2c2c2"></div>
<div class="t" style="left:0.5px;top:690.3px;width:25px;text-align:center;font-size:13px;line-height:16px;color:#262626">24</div>
<div class="r" style="left:25px;top:726px;width:792px;height:1px;background:#d5d5d5"></div>
<div class="r" style="left:0;top:726px;width:25px;height:1px;background:#c2c2c2"></div>
<div class="t" style="left:0.5px;top:710.3px;width:25px;text-align:center;font-size:13px;line-height:16px;color:#262626">25</div>
<div class="r" style="left:25px;top:746px;width:792px;height:1px;background:#d5d5d5"></div>
<div class="r" style="left:0;top:746px;width:25px;height:1px;background:#c2c2c2"></div>
<div class="t" style="left:0.5px;top:730.3px;width:25px;text-align:center;font-size:13px;line-height:16px;color:#262626">26</div>
<div class="r" style="left:24px;top:225px;width:67px;height:23px;border:2px solid #217346"></div>
<div class="r" style="left:86px;top:243px;width:7px;height:7px;background:#217346;border:1px solid #fff"></div>
<div class="r" style="left:172px;top:140px;width:388px;height:557px;background:#fff;border:1px solid #c6c6c6;border-radius:4px;box-shadow:0 5px 9px -2px rgba(0,0,0,0.15),0 0 2px rgba(0,0,0,0.04)"></div>
<div class="t" style="left:217.10px;top:150.06px;font-size:12.10px;line-height:12.10px;letter-spacing:-0.129px;word-spacing:0.129px;color:#262626;">1. <u>S</u>elect cells based on content, formatting and more...</div>
<div class="r" style="left:206px;top:199px;width:352px;height:1px;background:#e1e1e1"></div>
<div class="t" style="left:217.10px;top:178.06px;font-size:12.10px;line-height:12.10px;letter-spacing:-0.093px;word-spacing:0.093px;color:#262626;">2. <u>C</u>onditional row and column select, hide or delete...</div>
<div class="t" style="left:217.10px;top:209.06px;font-size:12.10px;line-height:12.10px;letter-spacing:-0.353px;word-spacing:0.353px;color:#262626;">3. <u>M</u>ove or resize selected range...</div>
<div class="r" style="left:174px;top:229px;width:384px;height:28px;background:#d4d4d4"></div>
<div class="t" style="left:217.10px;top:237.06px;font-size:12.10px;line-height:12.10px;letter-spacing:-0.463px;word-spacing:0.463px;color:#262626;">4. <u>D</u>eselect cells...</div>
<div class="t" style="left:217.10px;top:265.06px;font-size:12.10px;line-height:12.10px;letter-spacing:-0.342px;word-spacing:0.342px;color:#262626;">5. <u>I</u>nverse selection...</div>
<div class="r" style="left:206px;top:314px;width:352px;height:1px;background:#e1e1e1"></div>
<div class="t" style="left:217.10px;top:293.06px;font-size:12.10px;line-height:12.10px;letter-spacing:-0.293px;word-spacing:0.293px;color:#262626;">6. M<u>e</u>rge selection of selected areas</div>
<div class="t" style="left:217.10px;top:324.06px;font-size:12.10px;line-height:12.10px;letter-spacing:-0.204px;word-spacing:0.204px;color:#262626;">7. Se<u>l</u>ect adjacent cells below active cell with the same value</div>
<div class="t" style="left:217.10px;top:352.06px;font-size:12.10px;line-height:12.10px;letter-spacing:-0.171px;word-spacing:0.171px;color:#262626;">8. Selec<u>t</u> adjacent cells in column with the same value</div>
<div class="t" style="left:217.10px;top:380.06px;font-size:12.10px;line-height:12.10px;letter-spacing:-0.218px;word-spacing:0.218px;color:#262626;">9. E<u>x</u>tend selection to the last used row</div>
<div class="r" style="left:206px;top:429px;width:352px;height:1px;background:#e1e1e1"></div>
<div class="t" style="left:211.20px;top:408.06px;font-size:12.10px;line-height:12.10px;letter-spacing:-0.185px;word-spacing:0.185px;color:#262626;">10. Exte<u>n</u>d selection to the last used column</div>
<div class="r" style="left:206px;top:460px;width:352px;height:1px;background:#e1e1e1"></div>
<div class="t" style="left:211.20px;top:439.06px;font-size:12.10px;line-height:12.10px;letter-spacing:-0.269px;word-spacing:0.269px;color:#262626;">11. Select cell in sele<u>c</u>tion where value changes</div>
<div class="t" style="left:211.20px;top:470.06px;font-size:12.10px;line-height:12.10px;letter-spacing:-0.208px;word-spacing:0.208px;color:#262626;">12. Select cells <u>w</u>ith the smallest number</div>
<div class="t" style="left:211.20px;top:498.06px;font-size:12.10px;line-height:12.10px;letter-spacing:-0.222px;word-spacing:0.222px;color:#262626;">13. Select cells wit<u>h</u> the largest number</div>
<div class="r" style="left:206px;top:547px;width:352px;height:1px;background:#e1e1e1"></div>
<div class="t" style="left:211.20px;top:526.06px;font-size:12.10px;line-height:12.10px;letter-spacing:-0.287px;word-spacing:0.287px;color:#262626;">14. Select <u>a</u>ll cells with an error</div>
<div class="t" style="left:211.20px;top:557.06px;font-size:12.10px;line-height:12.10px;letter-spacing:-0.240px;word-spacing:0.240px;color:#262626;">15. Select all sheets in y<u>o</u>ur workbook</div>
<div class="r" style="left:206px;top:606px;width:352px;height:1px;background:#e1e1e1"></div>
<div class="t" style="left:211.20px;top:585.06px;font-size:12.10px;line-height:12.10px;letter-spacing:-0.209px;word-spacing:0.209px;color:#262626;">16. Select all o<u>b</u>jects on current worksheet</div>
<div class="t" style="left:211.20px;top:616.06px;font-size:12.10px;line-height:12.10px;letter-spacing:-0.210px;word-spacing:0.210px;color:#262626;">17. <u>P</u>rint preview selection</div>
<div class="r" style="left:206px;top:665px;width:352px;height:1px;background:#e1e1e1"></div>
<div class="t" style="left:211.20px;top:644.06px;font-size:12.10px;line-height:12.10px;letter-spacing:-0.230px;word-spacing:0.230px;color:#262626;">18. P<u>r</u>int selection</div>
<div class="t" style="left:211.20px;top:675.06px;font-size:12.10px;line-height:12.10px;letter-spacing:-0.241px;word-spacing:0.241px;color:#262626;">19. Set c<u>u</u>rrent selection to all worksheets</div>
<svg class="r" style="left:185px;top:146px" width="18" height="18" viewBox="0 0 18 18" fill="none"><rect x="1.7" y="2.7" width="14.5" height="12.4" fill="#fff"/><path d="M16.2,5.9 V2.7 H1.7 V15.1 H6" stroke="#333" stroke-width="1.1"/><path d="M6.2,3 V5.9 M11.1,3 V5.9 M2,6.3 H6.2 M2,11.2 H6.2" stroke="#808080" stroke-width="1"/><path d="M6.2,8 V6.3 H7.5 M11.5,6.3 H16.2 V13.8 M6.2,13 V15.1 H12.8" stroke="#1166c4" stroke-width="1.1"/><circle cx="10.3" cy="10" r="3.2" fill="#fff" stroke="#333" stroke-width="1.2"/><path d="M12.6,12.4 L16.4,16.3" stroke="#333" stroke-width="1.3"/></svg>
<svg class="r" style="left:185px;top:174px" width="18" height="18" viewBox="0 0 18 18" fill="none"><rect x="1.6" y="1.5" width="14.8" height="14.9" fill="#fff"/><rect x="2.1" y="2" width="13.8" height="2" fill="#d4d4d4"/><path d="M16.4,13.6 V1.5 H1.6 V16.4 H13.4" stroke="#333" stroke-width="1.1"/><path d="M2,4.4 H16" stroke="#333" stroke-width="1"/><path d="M6.5,4.8 V16 M11.6,4.8 V6 M2,8.4 H6.5 M2,12.5 H6.5 M15,8.4 H16 M15,12.5 H16" stroke="#808080" stroke-width="1"/><circle cx="10.55" cy="10.25" r="3.1" fill="#fff" stroke="#2b88d8" stroke-width="1.3"/><path d="M12.9,12.7 L16.6,16.5" stroke="#2b88d8" stroke-width="1.4"/></svg>
<svg class="r" style="left:185px;top:205px" width="18" height="18" viewBox="0 0 18 18" fill="none"><path d="M1.5,5.8 V1.5 H5.8 M11.2,1.5 H15.5 V5.8 M15.5,11.2 V15.5 H11.2 M5.8,15.5 H1.5 V11.2" stroke="#333" stroke-width="1.1"/><path d="M8.5,6.6 V1.8 M8.5,10.4 V15.2 M6.6,8.5 H1.8 M10.4,8.5 H15.2 M6.3,3.6 L8.5,1.4 L10.7,3.6 M6.3,13.4 L8.5,15.6 L10.7,13.4 M3.6,6.3 L1.4,8.5 L3.6,10.7 M13.4,6.3 L15.6,8.5 L13.4,10.7" stroke="#2b88d8" stroke-width="1.3" stroke-linecap="round"/></svg>
<svg class="r" style="left:185px;top:233px" width="18" height="18" viewBox="0 0 18 18" fill="none"><rect x="1.6" y="2.6" width="14.8" height="12.8" fill="#fff"/><path d="M6.8,15.4 V6.8 H16.4 V15.4 Z" fill="#a8d1f3"/><path d="M2,6.3 H16 M2,11.4 H6.3 M6.3,3 V15 M11.4,3 V6.3" stroke="#808080" stroke-width="1"/><path d="M16.4,2.6 H1.6 V15.4 H6.8" stroke="#333" stroke-width="1.1"/><path d="M6.4,15.3 V6.3 H16.4 V10" stroke="#1166c4" stroke-width="1.1"/><path d="M7.2,13.4 L13.4,7.2 L16.8,10.6 L10.6,16.8 Z" fill="#fff" stroke="#a83ec2" stroke-width="1.2"/><path d="M7.6,13.4 L9.8,11.2 L13.2,14.6 L11,16.8 Z" fill="#d08ae0"/></svg>
<svg class="r" style="left:185px;top:261px" width="18" height="18" viewBox="0 0 18 18" fill="none"><path d="M9.8,14.5 H1.6 V1.5 H14.5 V9.8" stroke="#333" stroke-width="1.1"/><path d="M3.5,9.3 H9.3 V3.3 M5.3,7.4 L3.3,9.3 L5.3,11.4 M7.4,5.3 L9.3,3.3 L11.4,5.3" stroke="#2b88d8" stroke-width="1.3" stroke-linecap="round"/><path d="M11.6,11.6 L15.6,15.6 M11.6,14.6 V11.6 H14.6" stroke="#333" stroke-width="1.1"/></svg>
<svg class="r" style="left:185px;top:289px" width="18" height="18" viewBox="0 0 18 18" fill="none"><rect x="2.6" y="2.6" width="4.6" height="2.7" rx="0.6" stroke="#333" stroke-width="1.1"/><rect x="10.6" y="2.6" width="4.8" height="2.7" rx="0.6" stroke="#333" stroke-width="1.1"/><rect x="2.6" y="7.7" width="4.6" height="2.65" rx="0.6" stroke="#333" stroke-width="1.1"/><rect x="10.6" y="7.7" width="4.8" height="2.65" rx="0.6" stroke="#333" stroke-width="1.1"/><rect x="2.6" y="12.7" width="4.6" height="2.7" rx="0.6" stroke="#333" stroke-width="1.1"/><rect x="10.6" y="12.7" width="4.8" height="2.7" rx="0.6" stroke="#333" stroke-width="1.1"/></svg>
<svg class="r" style="left:185px;top:320px" width="18" height="18" viewBox="0 0 18 18" fill="none"><path d="M1,6.5 C2.5,2.5 4.5,2 6,4 C8,7 10,11 12.5,12.5 C14,13.5 15.5,13.2 16.5,13" stroke="#333" stroke-width="1.1"/></svg>
<svg class="r" style="left:185px;top:348px" width="18" height="18" viewBox="0 0 18 18" fill="none"><path d="M1,6.5 C2.5,2.5 4.5,2 6,4 C8,7 10,11 12.5,12.5 C14,13.5 15.5,13.2 16.5,13" stroke="#333" stroke-width="1.1"/></svg>
<svg class="r" style="left:185px;top:376px" width="18" height="18" viewBox="0 0 18 18" fill="none"><path d="M6,1.5 H12 V10 H15.5 L9,17 L2.5,10 H6 Z" fill="#f8f8f8" stroke="#333" stroke-width="1.1"/></svg>
<svg class="r" style="left:185px;top:404px" width="18" height="18" viewBox="0 0 18 18" fill="none"><path d="M1.5,6.5 H10 V3 L16.5,9.5 L10,16 V12.5 H1.5 Z" fill="#f8f8f8" stroke="#333" stroke-width="1.1"/></svg>
<svg class="r" style="left:185px;top:435px" width="18" height="18" viewBox="0 0 18 18" fill="none"><path d="M9.6,1.2 L14.4,5.6 V16.4 H3.7 V11" stroke="#333" stroke-width="1.1"/><path d="M9.6,1.1 V6.4 H14.5" stroke="#333" stroke-width="1.1"/><path d="M3.6,1 H7.9 L6.6,4 H7.9 L1.8,9.8 L3,6.6 L1,5.8 Z" fill="#e8801a"/></svg>
<div class="t" style="left:189.5px;top:468.2px;font-size:16px;line-height:16px;font-weight:bold;color:#111">1</div>
<div class="t" style="left:189.3px;top:496.2px;font-size:16px;line-height:16px;font-weight:bold;color:#111">9</div>
<svg class="r" style="left:185px;top:519px" width="18" height="22" viewBox="0 0 18 22" fill="none"><path d="M8.4,4.1 L15.5,18 H1.5 Z" fill="#fde6b0" stroke="#e8731a" stroke-width="1.2" stroke-linejoin="round"/><path d="M8.4,9.4 V14.4" stroke="#333" stroke-width="1.5"/><path d="M6.3,15.4 L10,18.6 L16.5,12.2" stroke="#fff" stroke-width="2.6"/><path d="M6.3,15.4 L10,18.6 L16.5,12.2" stroke="#2aa04a" stroke-width="1.2"/></svg>
<svg class="r" style="left:185px;top:553px" width="18" height="18" viewBox="0 0 18 18" fill="none"><rect x="1.6" y="1.6" width="4.7" height="1.6" rx="0.8" stroke="#333" stroke-width="1.1"/><path d="M1.6,2.5 V9.4 H3.6 M6.4,2.4 H12.3 V6.7" stroke="#333" stroke-width="1.1"/><rect x="5.7" y="7.7" width="4.8" height="1.6" rx="0.8" fill="#fff" stroke="#333" stroke-width="1.1"/><path d="M10.5,8.5 H16.4 V15.4 H5.7 V8.7" stroke="#333" stroke-width="1.1"/></svg>
<svg class="r" style="left:185px;top:581px" width="18" height="18" viewBox="0 0 18 18" fill="none"><path d="M2.9,3.4 V10.6 M3.4,2.9 H10.6" stroke="#8cc4f2" stroke-width="1.6"/><path d="M1,1 h1.9 v1.9 h-1.9 Z M10.1,1 h1.9 v1.9 h-1.9 Z M1,10.1 h1.9 v1.9 h-1.9 Z" fill="#1166c4"/><path d="M4.2,2.6 H8.8 M2.6,4.2 V8.8 M10.5,4.2 V5.7 M4.2,10.4 H5.8" stroke="#1166c4" stroke-width="1"/><path d="M6,6 h1.9 v1.9 h-1.9 Z M15,6 h1.9 v1.9 h-1.9 Z M6,15 h1.9 v1.9 h-1.9 Z M15,15 h1.9 v1.9 h-1.9 Z" fill="#222"/><path d="M9,7.5 H14 M9,15.5 H14 M7.5,9 V13.8 M15.5,9 V13.8" stroke="#333" stroke-width="1"/><path d="M9,10.4 H14 M9,12.5 H14" stroke="#808080" stroke-width="0.9"/></svg>
<svg class="r" style="left:185px;top:612px" width="18" height="18" viewBox="0 0 18 18" fill="none"><rect x="3.7" y="1.5" width="10" height="15" fill="#fafafa"/><path d="M7.7,16.4 H3.7 V1.5 H9.8 L14.8,6.5" stroke="#333" stroke-width="1.1"/><path d="M9.6,1.8 V6.4 H14.8" stroke="#333" stroke-width="1.1"/><rect x="9.9" y="8.7" width="4.4" height="2" rx="0.4" fill="#fff" stroke="#333" stroke-width="1.1"/><rect x="7.7" y="11.3" width="8.7" height="2.9" rx="0.4" fill="#fff" stroke="#333" stroke-width="1.1"/><rect x="9.9" y="13.7" width="4.4" height="2.7" rx="0.4" fill="#fff" stroke="#333" stroke-width="1.1"/></svg>
<svg class="r" style="left:185px;top:640px" width="18" height="18" viewBox="0 0 18 18" fill="none"><rect x="3.7" y="1.5" width="10.7" height="15" fill="#fafafa"/><path d="M7.7,16.4 H3.7 V1.5 H14.4 V6.6" stroke="#333" stroke-width="1.1"/><path d="M6.1,5.4 H11.9 M6.1,8.4 H7.9" stroke="#777" stroke-width="1"/><rect x="9.9" y="8.7" width="4.4" height="2" rx="0.4" fill="#fff" stroke="#333" stroke-width="1.1"/><rect x="7.7" y="11.3" width="8.7" height="2.9" rx="0.4" fill="#fff" stroke="#333" stroke-width="1.1"/><rect x="9.9" y="13.7" width="4.4" height="2.7" rx="0.4" fill="#fff" stroke="#333" stroke-width="1.1"/></svg>
<svg class="r" style="left:185px;top:671px" width="18" height="18" viewBox="0 0 18 18" fill="none"><rect x="1.6" y="1.5" width="14.8" height="14.9" fill="#fff"/><path d="M1.6,7.7 V1.5 H16.4 V16.4 H1.6 V11" stroke="#333" stroke-width="1.1"/><path d="M8.5,14.8 H14.8 V7.3 Z" fill="#cfcfcf"/><path d="M8.5,14.8 H14.8 V7.8 H9" stroke="#777" stroke-width="1"/><rect x="3.7" y="3.7" width="2" height="1.9" stroke="#777" stroke-width="1"/><rect x="7.7" y="3.7" width="7.1" height="1.9" rx="0.9" stroke="#777" stroke-width="1"/><path d="M3.3,7.45 H5.6 M5.8,11.5 H3.7 V14.8 H5.8" stroke="#777" stroke-width="1"/><path d="M1,9.4 H10.6 M7.3,6.6 L10.8,9.4 L7.3,12.5" stroke="#2b88d8" stroke-width="1.4" stroke-linecap="round"/></svg>
</body></html>
